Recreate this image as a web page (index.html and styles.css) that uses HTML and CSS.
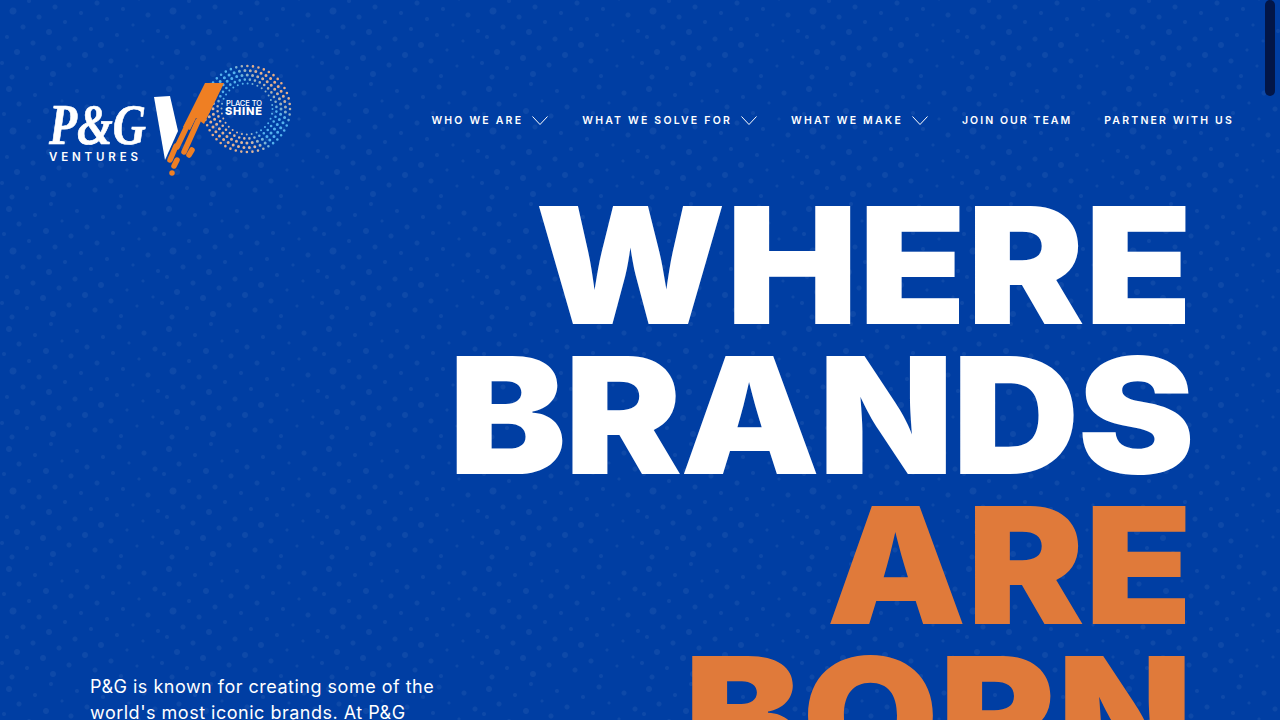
FILE: index.html
```html
<!DOCTYPE html>
<html lang="en">
<head>
<meta charset="utf-8">
<title>P&amp;G Ventures</title>
<link rel="stylesheet" href="styles.css">
</head>
<body>
<div class="page">
  <header class="header">
    <a class="logo" href="#" aria-label="P&amp;G Ventures">
      <svg width="250" height="120" viewBox="44 60 250 120">
        <defs>
          <linearGradient id="ring" gradientUnits="userSpaceOnUse" x1="212" y1="146" x2="282" y2="72">
            <stop offset="0" stop-color="#e9a77c"/>
            <stop offset="0.28" stop-color="#d9b9a5"/>
            <stop offset="0.42" stop-color="#53b2ee"/>
            <stop offset="0.68" stop-color="#53b2ee"/>
            <stop offset="0.85" stop-color="#e6b08c"/>
            <stop offset="1" stop-color="#e9a77c"/>
          </linearGradient>
        </defs>
        <g class="ring">
          <circle cx="247" cy="109" r="43" stroke-width="2.6" stroke-dasharray="0 5.63"/>
          <circle cx="247" cy="109" r="38.5" stroke-width="3" stroke-dasharray="0 5.5" stroke-dashoffset="2.5"/>
          <circle cx="247" cy="109" r="34" stroke-width="3" stroke-dasharray="0 5.34"/>
          <circle cx="247" cy="109" r="29.5" stroke-width="2.6" stroke-dasharray="0 5.15" stroke-dashoffset="2.5"/>
          <circle cx="247" cy="109" r="25.5" stroke-width="2" stroke-dasharray="0 5"/>
        </g>
        <text class="logo-pg" x="49" y="144" textLength="97" lengthAdjust="spacingAndGlyphs">P&amp;G</text>
        <text class="logo-ventures" x="49" y="161" textLength="89">VENTURES</text>
        <polygon class="logo-white" points="154,97 170,96 178,131 165,160"/>
        <polygon class="logo-orange" points="205,83 224,83 204,124 196,118 190,130 183,127"/>
        <g class="logo-streaks">
          <line x1="198" y1="121" x2="184" y2="152"/>
          <line x1="188" y1="124" x2="177" y2="147"/>
          <line x1="176" y1="146" x2="170" y2="160"/>
          <line x1="192" y1="150" x2="189" y2="155"/>
          <line x1="177" y1="160" x2="174" y2="166"/>
          <line x1="172" y1="173" x2="172" y2="173"/>
        </g>
        <text class="logo-place" x="226" y="106" textLength="36">PLACE TO</text>
        <text class="logo-shine" x="225" y="115" textLength="37">SHINE</text>
      </svg>
    </a>
    <nav class="nav">
      <a class="nav-item" href="#">WHO WE ARE
        <svg class="chev" width="16" height="9" viewBox="0 0 16 9"><path d="M.5.5 8 8.5 15.5.5"/></svg></a>
      <a class="nav-item" href="#">WHAT WE SOLVE FOR
        <svg class="chev" width="16" height="9" viewBox="0 0 16 9"><path d="M.5.5 8 8.5 15.5.5"/></svg></a>
      <a class="nav-item" href="#">WHAT WE MAKE
        <svg class="chev" width="16" height="9" viewBox="0 0 16 9"><path d="M.5.5 8 8.5 15.5.5"/></svg></a>
      <a class="nav-item nav-item-tight" href="#">JOIN OUR TEAM</a>
      <a class="nav-item" href="#">PARTNER WITH US</a>
    </nav>
  </header>
  <main class="hero">
    <p class="intro">P&amp;G is known for creating some of the<br>world's most iconic brands. At P&amp;G</p>
    <h1 class="title">
      <span class="line">WHERE</span>
      <span class="line line-tight">BRANDS</span>
      <span class="line accent">ARE</span>
      <span class="line accent">BORN</span>
    </h1>
  </main>
  <div class="scroll-thumb"></div>
</div>
</body>
</html>
```
FILE: styles.css
```css
* { box-sizing: border-box; }
html, body { margin: 0; padding: 0; height: 720px; overflow: hidden; }
body { font-family: Inter, "Liberation Sans", sans-serif; color: #fff; background: #003ea3; }

.page {
  --d: rgba(255,255,255,.055);
  position: relative;
  width: 1280px;
  height: 720px;
  overflow: hidden;
  background-color: #003ea3;
  background-position: 0 200px;
  background-size: 160px 120px;
  background-image:
    radial-gradient(circle at 9px 9px, var(--d) 2.5px, transparent 3.5px),
    radial-gradient(circle at 51px 4px, var(--d) 1.5px, transparent 2.5px),
    radial-gradient(circle at 77px 11px, var(--d) 1.5px, transparent 2.5px),
    radial-gradient(circle at 119px 7px, var(--d) 2px, transparent 3px),
    radial-gradient(circle at 144px 13px, var(--d) 2px, transparent 3px),
    radial-gradient(circle at 35px 15px, var(--d) 1.5px, transparent 2.5px),
    radial-gradient(circle at 103px 17px, var(--d) 1.5px, transparent 2.5px),
    radial-gradient(circle at 62px 21px, var(--d) 1px, transparent 2px),
    radial-gradient(circle at 19px 24px, var(--d) 2px, transparent 3px),
    radial-gradient(circle at 87px 27px, var(--d) 2px, transparent 3px),
    radial-gradient(circle at 129px 23px, var(--d) 1px, transparent 2px),
    radial-gradient(circle at 155px 29px, var(--d) 2px, transparent 3px),
    radial-gradient(circle at 46px 31px, var(--d) 2.5px, transparent 3.5px),
    radial-gradient(circle at 113px 33px, var(--d) 1.5px, transparent 2.5px),
    radial-gradient(circle at 71px 36px, var(--d) 2px, transparent 3px),
    radial-gradient(circle at 4px 34px, var(--d) 1.5px, transparent 2.5px),
    radial-gradient(circle at 29px 41px, var(--d) 1.5px, transparent 2.5px),
    radial-gradient(circle at 97px 43px, var(--d) 2px, transparent 3px),
    radial-gradient(circle at 139px 39px, var(--d) 1px, transparent 2px),
    radial-gradient(circle at 55px 47px, var(--d) 2px, transparent 3px),
    radial-gradient(circle at 13px 51px, var(--d) 3px, transparent 4px),
    radial-gradient(circle at 81px 53px, var(--d) 1.5px, transparent 2.5px),
    radial-gradient(circle at 123px 49px, var(--d) 1.5px, transparent 2.5px),
    radial-gradient(circle at 148px 55px, var(--d) 2px, transparent 3px),
    radial-gradient(circle at 39px 57px, var(--d) 2px, transparent 3px),
    radial-gradient(circle at 65px 62px, var(--d) 1.5px, transparent 2.5px),
    radial-gradient(circle at 107px 59px, var(--d) 1.5px, transparent 2.5px),
    radial-gradient(circle at 23px 67px, var(--d) 2px, transparent 3px),
    radial-gradient(circle at 133px 65px, var(--d) 1px, transparent 2px),
    radial-gradient(circle at 91px 69px, var(--d) 1.5px, transparent 2.5px),
    radial-gradient(circle at 49px 72px, var(--d) 2.5px, transparent 3.5px),
    radial-gradient(circle at 7px 77px, var(--d) 1.5px, transparent 2.5px),
    radial-gradient(circle at 117px 75px, var(--d) 1.5px, transparent 2.5px),
    radial-gradient(circle at 158px 71px, var(--d) 1.5px, transparent 2.5px),
    radial-gradient(circle at 75px 79px, var(--d) 2px, transparent 3px),
    radial-gradient(circle at 33px 83px, var(--d) 2px, transparent 3px),
    radial-gradient(circle at 143px 81px, var(--d) 1px, transparent 2px),
    radial-gradient(circle at 101px 85px, var(--d) 2.5px, transparent 3.5px),
    radial-gradient(circle at 59px 88px, var(--d) 2px, transparent 3px),
    radial-gradient(circle at 17px 92px, var(--d) 2.5px, transparent 3.5px),
    radial-gradient(circle at 127px 90px, var(--d) 1px, transparent 2px),
    radial-gradient(circle at 85px 95px, var(--d) 2.5px, transparent 3.5px),
    radial-gradient(circle at 43px 98px, var(--d) 2.5px, transparent 3.5px),
    radial-gradient(circle at 153px 97px, var(--d) 1px, transparent 2px),
    radial-gradient(circle at 111px 101px, var(--d) 2px, transparent 3px),
    radial-gradient(circle at 2px 103px, var(--d) 1.5px, transparent 2.5px),
    radial-gradient(circle at 69px 105px, var(--d) 2px, transparent 3px),
    radial-gradient(circle at 27px 108px, var(--d) 1.5px, transparent 2.5px),
    radial-gradient(circle at 137px 106px, var(--d) 1px, transparent 2px),
    radial-gradient(circle at 95px 110px, var(--d) 2px, transparent 3px),
    radial-gradient(circle at 53px 114px, var(--d) 2.5px, transparent 3.5px),
    radial-gradient(circle at 12px 117px, var(--d) 2px, transparent 3px),
    radial-gradient(circle at 121px 116px, var(--d) 1.5px, transparent 2.5px);
}

.header {
  display: flex;
  justify-content: space-between;
  align-items: center;
  height: 180px;
  padding: 60px 46px 0 44px;
}
.logo { display: block; line-height: 0; }

.ring circle { fill: none; stroke: url(#ring); stroke-linecap: round; }
.logo-pg { font: italic 700 58px "Liberation Serif", serif; fill: #fff; stroke: #fff; stroke-width: .7px; }
.logo-ventures { font: 600 11.5px Inter, sans-serif; fill: #fff; }
.logo-white { fill: #fff; }
.logo-orange { fill: #ef7f23; }
.logo-streaks line { stroke: #ef7f23; stroke-width: 5.5; stroke-linecap: round; }
.logo-place { font: 500 7.5px Inter, sans-serif; fill: #fff; }
.logo-shine { font: 800 11px Inter, sans-serif; fill: #fff; }

.nav { display: flex; align-items: center; gap: 32px; }
.nav-item {
  display: flex;
  align-items: center;
  gap: 9px;
  font-size: 10.5px;
  font-weight: 600;
  letter-spacing: 2.2px;
  color: #fff;
  text-decoration: none;
  white-space: nowrap;
}
.nav-item-tight { letter-spacing: 2.05px; }
.chev { fill: none; stroke: #fff; stroke-width: 1; margin-right: 2px; }

.hero {
  display: flex;
  justify-content: space-between;
  padding: 0 87px 0 90px;
}
.intro {
  margin: 494px 0 0;
  font-size: 18px;
  line-height: 26px;
  letter-spacing: .5px;
  white-space: nowrap;
}
.title {
  margin: 10px 0 0;
  font-size: 162px;
  font-weight: 900;
  line-height: 150px;
  text-align: right;
  transform: scaleX(1.09);
  transform-origin: right top;
}
.line { display: block; }
.line-tight { letter-spacing: -2px; }
.accent { color: #e07a3a; }

.scroll-thumb {
  position: absolute;
  top: 0;
  right: 5px;
  width: 10px;
  height: 96px;
  border-radius: 5px;
  background: #021648;
}
```
